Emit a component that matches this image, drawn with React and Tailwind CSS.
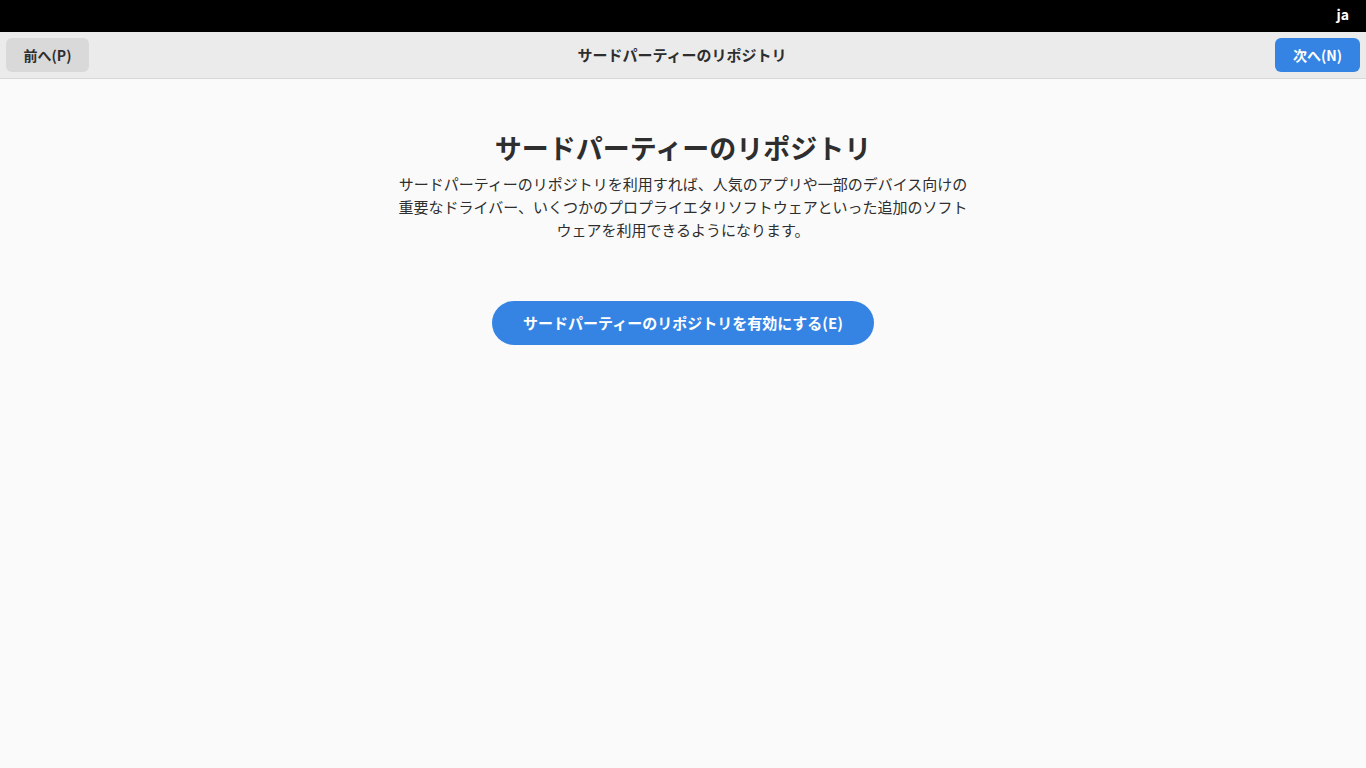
const font = { fontFamily: '"Noto Sans CJK JP", "Noto Sans", sans-serif' };

export default function App() {
  return (
    <div className="w-[1366px] h-[768px] flex flex-col bg-[#fafafa] text-[#2e2e2e]" style={font}>
      {/* top bar */}
      <div className="h-[32px] bg-black flex items-center justify-end pr-[17px] pb-[3px]">
        <span className="text-white text-[14px] font-bold">ja</span>
      </div>

      {/* header bar */}
      <div className="h-[47px] bg-[#ebebeb] border-b border-[#d8d8d8] flex items-center justify-between px-[6px]">
        <button className="h-[34px] w-[83px] rounded-[6px] bg-[#d9d9d9] text-[14px] font-bold text-[#2e2e2e]">
          前へ(P)
        </button>
        <h1 className="text-[15px] font-bold text-[#2e2e2e]">サードパーティーのリポジトリ</h1>
        <button className="h-[34px] w-[85px] rounded-[6px] bg-[#3584e4] text-[14px] font-bold text-white">
          次へ(N)
        </button>
      </div>

      {/* content */}
      <div className="flex-1 flex flex-col items-center pt-[49px]">
        <h2 className="text-[27px] font-bold leading-[40px] text-[#2e2e2e]">サードパーティーのリポジトリ</h2>
        <p className="w-[580px] text-center text-[15px] leading-[23px] text-[#2e2e2e] mt-[4px]">
          サードパーティーのリポジトリを利用すれば、人気のアプリや一部のデバイス向けの重要なドライバー、いくつかのプロプライエタリソフトウェアといった追加のソフトウェアを利用できるようになります。
        </p>
        <button className="mt-[60px] h-[44px] w-[382px] rounded-full bg-[#3584e4] text-white text-[15px] font-bold">
          サードパーティーのリポジトリを有効にする(E)
        </button>
      </div>
    </div>
  );
}
